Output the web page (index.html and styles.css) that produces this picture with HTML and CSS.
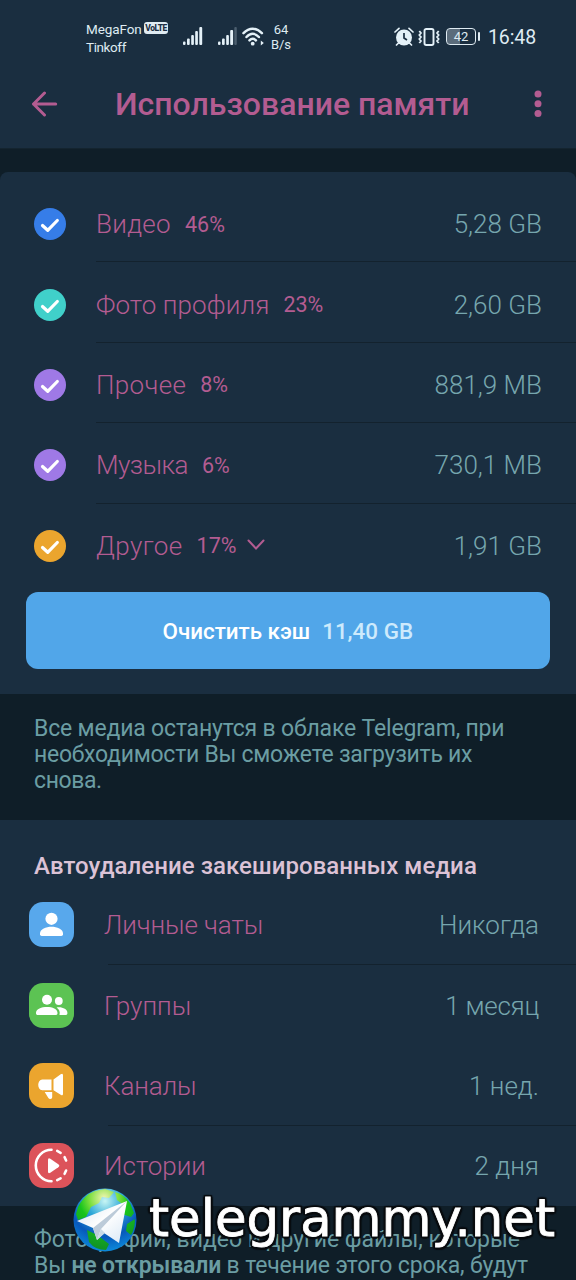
FILE: index.html
```html
<!DOCTYPE html>
<html lang="ru">
<head>
<meta charset="utf-8">
<title>Использование памяти</title>
<link rel="stylesheet" href="styles.css">
</head>
<body>
<div class="screen">
  <header class="top">
    <div class="status">
      <div class="carriers"><div class="carrier"><span class="c1">MegaFon</span><span class="volte">VoLTE</span></div><div class="c2">Tinkoff</div></div>
      <svg class="sig1" width="20" height="19" viewBox="0 0 20 19" fill="#e4f1f8"><rect x="0" y="14.500" width="2.500" height="3.500" rx="1"/><rect x="4" y="11.500" width="2.700" height="6.500" rx="1"/><rect x="8.200" y="8" width="2.700" height="10" rx="1"/><rect x="12.200" y="4" width="2.700" height="14" rx="1"/><rect x="16.300" y="0" width="2.900" height="18" rx="1"/></svg>
      <svg class="sig2" width="20" height="19" viewBox="0 0 20 19" fill="#e4f1f8"><rect x="0" y="14.500" width="2.500" height="3.500" rx="1"/><rect x="4" y="11.500" width="2.700" height="6.500" rx="1"/><rect x="8.200" y="8" width="2.700" height="10" rx="1"/><rect x="12.200" y="3" width="2.900" height="15" rx="1"/><rect x="16.300" y="0" width="2.500" height="18" rx="1" fill="#4b5e6e"/></svg>
      <svg class="wifi" width="24" height="20" viewBox="0 0 24 20" fill="none" stroke="#e4f1f8" stroke-width="2.500" stroke-linecap="round"><path d="M1.500 6.200C7.200 .2 14.200.2 19.900 6.200M4.500 10c3.900-4.300 8.500-4.300 12.400 0M7.500 13.400c2-2.200 4.500-2.200 6.400 0"/><circle cx="10.700" cy="16.700" r="1.900" fill="#e4f1f8" stroke="none"/><path d="M18.800 13.500l3 2.500-3 2.500z" fill="#e4f1f8" stroke="none"/></svg>
      <div class="rate"><span>64</span><span>B/s</span></div>
      <svg class="alarm" width="20" height="20" viewBox="0 0 20 20"><circle cx="10" cy="10.500" r="8" fill="#e4f1f8"/><path d="M10 6v5l3 2" fill="none" stroke="#1a2e40" stroke-width="1.700"/><path d="M1 5l4-3.700M19 5l-4-3.700M4.500 16l-2 2M15.500 16l2 2" stroke="#e4f1f8" stroke-width="1.700" stroke-linecap="round"/></svg>
      <svg class="vibe" width="22" height="18" viewBox="0 0 22 18" fill="none" stroke="#e4f1f8" stroke-width="1.900" stroke-linejoin="round"><rect x="6.500" y="1" width="9" height="16" rx="1.700"/><path d="M1.300 3l1.700 2-1.700 2L3 9l-1.700 2L3 13l-1.700 2M20.700 3L19 5l1.700 2L19 9l1.700 2-1.700 2 1.700 2"/></svg>
      <div class="battery"><span>42</span></div><i class="cap"></i>
      <div class="clock">16:48</div>
    </div>
    <div class="bar">
      <svg class="back" width="28" height="26" viewBox="0 0 28 26" fill="none" stroke="#b35c91" stroke-width="3" stroke-linecap="round" stroke-linejoin="round"><path d="M14.500 2L3.500 13l11 11M3.500 13H25.700"/></svg>
      <h1 class="title">Использование памяти</h1>
      <svg class="more" width="8" height="28" viewBox="0 0 8 28" fill="#b35c91"><circle cx="4" cy="4" r="3.500"/><circle cx="4" cy="13.800" r="3.500"/><circle cx="4" cy="23.600" r="3.500"/></svg>
    </div>
  </header>

  <section class="usage">
    <div class="row"><i class="check blue"><svg width="20" height="16" viewBox="0 0 20 16"><path d="M2.500 8.500l5.200 4.800L17.300 3.500"/></svg></i><div class="cell"><span class="name n1">Видео</span><span class="pct">46%</span><span class="size">5,28 GB</span></div></div>
    <div class="row"><i class="check teal"><svg width="20" height="16" viewBox="0 0 20 16"><path d="M2.500 8.500l5.200 4.800L17.300 3.500"/></svg></i><div class="cell"><span class="name n2">Фото профиля</span><span class="pct">23%</span><span class="size">2,60 GB</span></div></div>
    <div class="row"><i class="check violet"><svg width="20" height="16" viewBox="0 0 20 16"><path d="M2.500 8.500l5.200 4.800L17.300 3.500"/></svg></i><div class="cell"><span class="name n3">Прочее</span><span class="pct">8%</span><span class="size">881,9 MB</span></div></div>
    <div class="row"><i class="check violet"><svg width="20" height="16" viewBox="0 0 20 16"><path d="M2.500 8.500l5.200 4.800L17.300 3.500"/></svg></i><div class="cell"><span class="name n4">Музыка</span><span class="pct">6%</span><span class="size">730,1 MB</span></div></div>
    <div class="row"><i class="check amber"><svg width="20" height="16" viewBox="0 0 20 16"><path d="M2.500 8.500l5.200 4.800L17.300 3.500"/></svg></i><div class="cell last"><span class="name n5">Другое</span><span class="pct">17%</span><svg class="chev" width="18" height="12" viewBox="0 0 18 12" fill="none" stroke="#b35c91" stroke-width="2" stroke-linecap="round"><path d="M1.500 1.500L9 9.500l7.500-8"/></svg><span class="size">1,91 GB</span></div></div>
    <button class="clear"><span class="clear-label">Очистить кэш</span><span class="clear-size">11,40 GB</span></button>
  </section>

  <p class="note"><span class="l1">Все медиа останутся в облаке Telegram, при</span><br><span class="l2">необходимости Вы сможете загрузить их</span><br><span class="l3">снова.</span></p>

  <section class="auto">
    <h2 class="heading">Автоудаление закешированных медиа</h2>
    <div class="item"><svg class="tile sky" width="45" height="45" viewBox="0 0 45 45" fill="#fff"><circle cx="22.500" cy="16.800" r="6.100"/><path d="M11 31.500c0-4.500 6-6.800 11.500-6.800S34 27 34 31.500v.8q0 1.700-1.700 1.700H12.700Q11 34 11 32.300z"/></svg><div class="itemcell line"><span class="iname i1">Личные чаты</span><span class="val v1">Никогда</span></div></div>
    <div class="item"><svg class="tile green" width="45" height="45" viewBox="0 0 45 45" fill="#fff"><circle cx="18" cy="16.800" r="5"/><circle cx="29.800" cy="18" r="3.900"/><path d="M7 29.800c0-3.900 5.600-5.900 11-5.900s10.500 2 10.500 5.900v.8q0 1.400-1.400 1.400H8.400Q7 32 7 30.600z"/><path d="M27.600 24.500c5.100-1 10.800 1.400 10.800 5.300v.8q0 1.400-1.400 1.400h-6.500c.8-3.600-.4-5.800-2.900-7.500z"/></svg><div class="itemcell"><span class="iname i2">Группы</span><span class="val v2">1 месяц</span></div></div>
    <div class="item"><svg class="tile amber" width="45" height="45" viewBox="0 0 45 45" fill="#fff"><path d="M13.300 16.500h9.200v10.700h-9.200c-5.400 0-5.400-10.700 0-10.700zM24.500 16.500l7.200-5.300q2.300-1.500 2.300 1v18.600q0 2.500-2.300 1l-7.200-4.600zM15.700 29h7.500v5.300q0 1.700-1.800 1.700-1.500 0-2.200-1.300z"/></svg><div class="itemcell line"><span class="iname i3">Каналы</span><span class="val v3">1 нед.</span></div></div>
    <div class="item"><svg class="tile red" width="45" height="45" viewBox="0 0 45 45"><path d="M22.500 6.800a15.700 15.700 0 0 0 0 31.400" fill="none" stroke="#fff" stroke-width="2.600" stroke-linecap="round"/><path d="M28.200 7.900l3.400 1.900M35.600 14.200l1.500 3.400M37.100 27.500l-1.500 3.300M31.600 35.300l-3.400 1.800" fill="none" stroke="#fff" stroke-width="2.600" stroke-linecap="round"/><path d="M19 17v11.400q0 2.700 2.300 1.300l8-5.500q2-1.500 0-3l-8-5.500Q19 14.300 19 17z" fill="#fff"/></svg><div class="itemcell"><span class="iname i4">Истории</span><span class="val v4">2 дня</span></div></div>
  </section>

  <p class="note foot"><span class="f1">Фотографии, видео и другие файлы, которые</span><br><span class="f2">Вы <b>не открывали</b> в течение этого срока, будут</span></p>

  <div class="mark">
    <svg width="64" height="64" viewBox="0 0 64 64">
      <defs><radialGradient id="sea" cx=".5" cy=".2" r=".8"><stop offset="0" stop-color="#c8f6f4"/><stop offset=".35" stop-color="#2fa9d8"/><stop offset=".7" stop-color="#0758bb"/><stop offset="1" stop-color="#0c8ada"/></radialGradient><radialGradient id="land" gradientUnits="userSpaceOnUse" cx="31" cy="10" r="50"><stop offset="0" stop-color="#f0f5b0"/><stop offset=".3" stop-color="#7ade3c"/><stop offset=".5" stop-color="#18c41c"/><stop offset="1" stop-color="#119325"/></radialGradient><linearGradient id="wing" x1="0" y1="0" x2="1" y2="1"><stop offset="0" stop-color="#d5e3ef"/><stop offset=".5" stop-color="#fff"/><stop offset="1" stop-color="#d7e6f5"/></linearGradient></defs>
      <circle cx="32" cy="32" r="31.500" fill="url(#sea)"/>
      <path d="M5 19Q11 7 22 3l10-2 9 3-5 6-7-1-3 6-8 4-5 10-8 3-2-6zM42 4q10 3 15 11l4 10-3 4-9-3 3-8-8-6zM54 36l8-5q0 10-4 16l-5-4zM14 42l10 5 12 9-3 6q-11 0-17-8z" fill="url(#land)"/>
      <path d="M4 33L54 13 46 55 31 45 24 52 20 40z" fill="url(#wing)"/>
      <path d="M20 40L54 13 28 41 24 52z" fill="#bccbd9"/><path d="M24 52l4-11 4 4z" fill="#c9d9e7"/>
    </svg>
    <span class="mark-text">telegrammy.net</span>
  </div>
</div>
</body>
</html>
```
FILE: styles.css
```css
* { box-sizing: border-box; }
body { margin: 0; background: #0f1e28; font-family: Roboto, "Noto Sans", sans-serif; }
.screen { position: relative; width: 576px; height: 1280px; overflow: hidden; background: #0f1e28; }
svg { display: block; flex: none; }

.top { height: 149px; background: #1a2e40; border-bottom: 1px solid #14242f; }
.status { display: flex; height: 60px; padding: 20px 0 0 86px; color: #dfebf2; align-items: flex-start; }
.carriers { width: 97px; font-size: 13.500px; line-height: 18px; white-space: nowrap; }
.carrier { display: flex; align-items: center; }
.c1 { width: 58px; letter-spacing: -.1px; }
.c2 { letter-spacing: -.4px; }
.volte { width: 24px; height: 12px; margin-top: -2px; border-radius: 3px; background: #dfebf2; color: #1a2e40; font-size: 8.500px; font-weight: 800; line-height: 12.500px; text-align: center; letter-spacing: -.5px; }
.sig1 { margin-top: 7px; }
.sig2 { margin: 7px 0 0 15px; }
.wifi { margin: 7px 0 0 4px; }
.rate { display: flex; flex-direction: column; width: 22px; margin: 2px 0 0 4px; align-items: center; font-size: 13px; line-height: 15px; }
.alarm { margin: 7px 0 0 102px; }
.vibe { margin: 8px 0 0 4px; }
.battery { width: 30px; height: 17px; margin: 8px 0 0 6px; border: 1.500px solid #dfebf2; border-radius: 4px; background: linear-gradient(90deg, #5b6c7b 0 46%, transparent 46%) padding-box; font-size: 13px; line-height: 15px; text-align: center; }
.cap { width: 2px; height: 9px; margin: 12px 0 0 2px; background: #dfebf2; border-radius: 1px; }
.clock { margin: 5px 0 0 8px; font-size: 19.500px; line-height: 26px; letter-spacing: -.1px; }
.bar { display: flex; align-items: center; height: 88px; padding-left: 30px; }
.title { flex: none; width: 388px; margin: 0 0 0 57px; color: #b35c91; font-size: 32px; font-weight: 500; line-height: 40px; white-space: nowrap; }
.more { margin-left: 30.500px; }

.usage { height: 522px; margin-top: 23px; padding-top: 10px; border-radius: 8px 8px 0 0; background: #1a2e40; }
.row { display: flex; height: 80.400px; padding-left: 34px; align-items: center; }
.check { display: flex; flex: none; width: 32px; height: 32px; margin: 4px 30px 0 0; border-radius: 50%; align-items: center; justify-content: center; }
.check svg { margin-top: 2px; }
.check path { fill: none; stroke: #fff; stroke-width: 3.200; stroke-linecap: round; stroke-linejoin: round; }
.blue { background: #367de8; }
.teal { background: #40d0ca; }
.violet { background: #9f79e6; }
.amber { background: #eba52e; }
.cell { display: flex; flex: 1; height: 80.400px; padding: 5px 34px 0 0; align-items: center; border-bottom: 1px solid #13222e; white-space: nowrap; }
.cell.last { border-color: transparent; }
.name, .iname { color: #b35c91; font-size: 26px; font-weight: 330; }
.n1 { letter-spacing: .3px; }
.n2 { letter-spacing: .1px; }
.n3 { letter-spacing: .35px; }
.n4 { letter-spacing: -.5px; }
.n5 { letter-spacing: .4px; }
.pct { margin-left: 14px; color: #b35c91; font-size: 21.500px; font-weight: 450; }
.size, .val { margin-left: auto; color: #76a6ae; font-size: 26px; font-weight: 330; }
.chev { margin: -2px 0 0 10px; }
.clear { display: flex; width: 524.500px; height: 77px; margin: 8px 0 0 25.500px; padding: 2px 0 0; border: 0; border-radius: 12px; background: #51a6e9; align-items: center; justify-content: center; gap: 12px; font: 500 22.400px Roboto, sans-serif; color: #fff; white-space: nowrap; }
.clear-size { color: #cdeafc; }

.note { height: 126px; margin: 0; padding: 22px 0 0 34px; color: #6b9da3; font-size: 23px; font-weight: 370; line-height: 26px; white-space: nowrap; }
.l1 { letter-spacing: -.18px; }
.l2 { letter-spacing: -.26px; }
.l3 { letter-spacing: -.4px; }
.f1 { letter-spacing: -.03px; }
.f2 { letter-spacing: -.16px; }
.auto { height: 386px; background: #1a2e40; }
.heading { height: 64.500px; margin: 0; padding: 30px 0 0 34px; color: #dcc2d6; font-size: 24px; font-weight: 500; line-height: 32px; letter-spacing: .05px; white-space: nowrap; }
.item { display: flex; height: 80.400px; padding-left: 29px; align-items: center; }
.tile { margin-right: 30px; border-radius: 14px; }
.sky { background: #58a8ec; }
.green { background: #5cc353; }
.red { background: #dc535a; }
.itemcell { position: relative; display: flex; flex: 1; height: 80.400px; padding: 1px 37px 0 0; align-items: center; white-space: nowrap; }
.i1 { letter-spacing: -.08px; }
.i3 { letter-spacing: -.15px; }
.v2 { letter-spacing: -.25px; }
.line::after { content: ""; position: absolute; left: 4px; right: 0; bottom: 0; height: 1px; background: #13222e; }
.foot { height: 74px; padding-top: 21px; }
.foot b { font-weight: 600; }

.mark { position: absolute; left: 73px; top: 1188px; display: flex; }
.mark-text { margin-left: 12px; color: #fff; font: 51.300px/60px "DejaVu Sans", sans-serif; -webkit-text-stroke: .8px #fff; text-shadow: 2.500px 0 1px #080b0e, -2.500px 0 1px #080b0e, 0 2.500px 1px #080b0e, 0 -2.500px 1px #080b0e, 2px 2px 1px #080b0e, -2px 2px 1px #080b0e, 2px -2px 1px #080b0e, -2px -2px 1px #080b0e; white-space: nowrap; }
```
